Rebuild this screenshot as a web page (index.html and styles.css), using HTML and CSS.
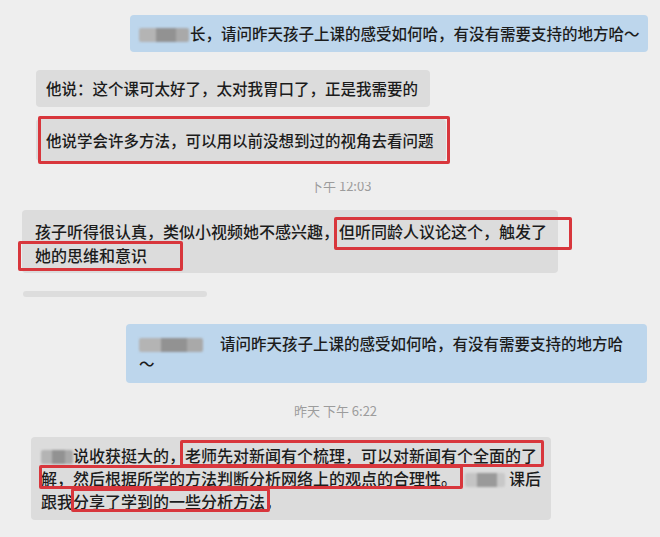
FILE: index.html
```html
<!DOCTYPE html>
<html lang="zh-CN">
<head>
<meta charset="utf-8">
<title>聊天记录</title>
<link rel="stylesheet" href="styles.css">
</head>
<body>
<div class="chat">
  <div class="bubble blue b1"><span class="blur bl1"></span>长，请问昨天孩子上课的感受如何哈，有没有需要支持的地方哈～</div>

  <div class="bubble gray b2">他说：这个课可太好了，太对我胃口了，正是我需要的</div>

  <div class="bubble gray b3">他说学会许多方法，可以用以前没想到过的视角去看问题<span class="mark m3"></span></div>

  <div class="time t1"><span class="time-in">下午 12:03</span></div>

  <div class="bubble gray b4">孩子听得很认真，类似小视频她不感兴趣，但听同龄人议论这个，触发了<br>她的思维和意识<span class="mark m4a"></span><span class="mark m4b"></span></div>

  <div class="stub"></div>

  <div class="bubble blue b5"><span class="blur bl5"></span><span class="gap"></span>请问昨天孩子上课的感受如何哈，有没有需要支持的地方哈<br>～</div>

  <div class="time t2">昨天 下午 6:22</div>

  <div class="bubble gray b6"><span class="blur bl6a"></span>说收获挺大的，老师先对新闻有个梳理，可以对新闻有个全面的了<br>解，然后根据所学的方法判断分析网络上的观点的合理性。<span class="blur bl6b"></span>课后<br>跟我分享了学到的一些分析方法，<span class="mark m6a"></span><span class="mark m6b"></span><span class="mark m6c"></span></div>
</div>
</body>
</html>
```

FILE: styles.css
```css
html, body {
  margin: 0;
  padding: 0;
  background: #eeeeee;
}

body {
  width: 660px;
  height: 537px;
  overflow: hidden;
  font-family: "Noto Sans CJK SC", "Noto Sans", sans-serif;
  font-weight: 500;
  color: #1c1c1c;
}

.chat {
  display: flex;
  flex-direction: column;
  align-items: flex-start;
}

.bubble {
  position: relative;
  box-sizing: border-box;
  border-radius: 4px;
  white-space: nowrap;
}

.blue {
  background: #bdd6ec;
}

.gray {
  background: #dcdcdc;
}

.b1 {
  margin: 15px 0 0 130px;
  width: 518px;
  height: 37px;
  padding-left: 9px;
  font-size: 15.5px;
  line-height: 37px;
}

.b2 {
  margin: 18px 0 0 36px;
  width: 394px;
  height: 37px;
  padding-left: 10px;
  font-size: 15.5px;
  line-height: 37px;
}

.b3 {
  margin: 12px 0 0 36px;
  width: 410px;
  height: 42px;
  padding-left: 10px;
  font-size: 15.5px;
  line-height: 42px;
}

.time {
  color: #9c9c9c;
  font-size: 13px;
  font-weight: 400;
  white-space: nowrap;
}

.t1 {
  margin: 21px 0 0 310px;
  height: 12px;
  overflow: hidden;
  line-height: 16px;
}

.time-in {
  display: block;
  margin-top: -4px;
}

.b4 {
  margin: 16px 0 0 22px;
  width: 536px;
  height: 63px;
  padding: 9px 0 0 13px;
  font-size: 16px;
  line-height: 24px;
}

.stub {
  margin: 18px 0 0 23px;
  width: 184px;
  height: 6px;
  border-radius: 3px;
  background: #dddddd;
}

.b5 {
  margin: 27px 0 0 126px;
  width: 521px;
  height: 59px;
  padding: 9px 0 0 13px;
  font-size: 15.5px;
  line-height: 20px;
}

.t2 {
  margin: 19px 0 0 294px;
  line-height: 18px;
}

.b6 {
  margin: 17px 0 0 31px;
  width: 520px;
  height: 83px;
  padding: 7px 0 0 10px;
  font-size: 16px;
  line-height: 23px;
}

.blur {
  display: inline-block;
  height: 14px;
  vertical-align: -2px;
  border-radius: 2px;
  filter: blur(1.2px);
  background: linear-gradient(90deg, #b4b4b4 0 35%, #929292 35% 75%, #a9a9a9 75% 100%);
}

.bl1 { width: 50px; margin-right: 1px; }
.bl5 { width: 64px; }
.gap { display: inline-block; width: 17px; }
.bl6a { width: 32px; }
.bl6b { width: 40px; margin: 0 4px 0 8px; background: linear-gradient(90deg, #c4c4c4 0 30%, #9a9a9a 30% 80%, #c8c8c8 80% 100%); }

.mark {
  position: absolute;
  box-sizing: border-box;
  border: 3px solid #d8363c;
  border-radius: 2px;
}

.m3 { left: 2px; top: -3px; width: 412px; height: 48px; }

.m4a { left: 312px; top: 7px; width: 238px; height: 33px; }
.m4b { left: -4px; top: 31px; width: 165px; height: 30px; }

.m6a { left: 149px; top: 3px; width: 364px; height: 27px; }
.m6b { left: 8px; top: 28px; width: 424px; height: 24px; }
.m6c { left: 40px; top: 51px; width: 199px; height: 24px; }
```
